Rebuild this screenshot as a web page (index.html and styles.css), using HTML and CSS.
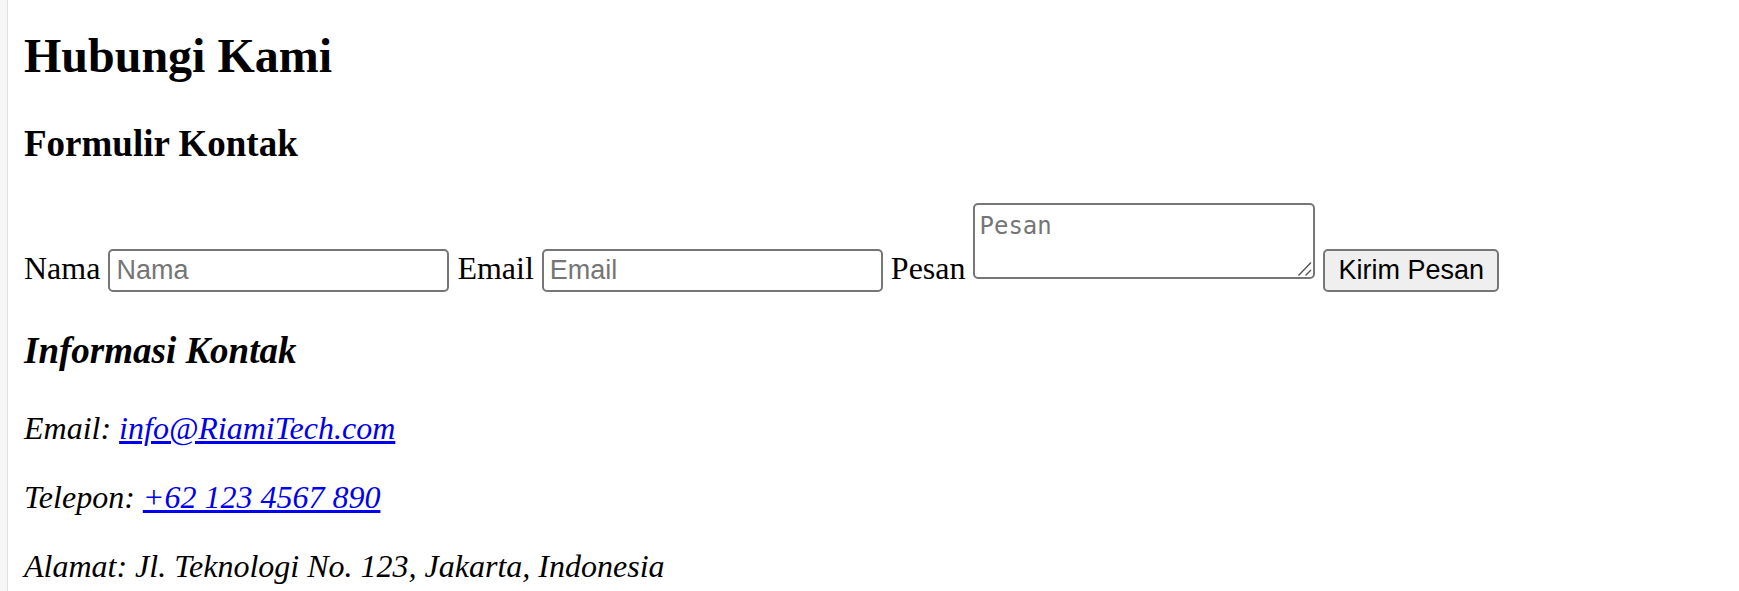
FILE: index.html
```html
<!DOCTYPE html>
<html lang="id">
<head>
<meta charset="utf-8">
<title>Hubungi Kami</title>
<link rel="stylesheet" href="styles.css">
</head>
<body>
<main class="page">
  <h1 class="title">Hubungi Kami</h1>
  <section>
    <h2 class="subtitle">Formulir Kontak</h2>
    <form class="form">
      <label for="nama">Nama</label>
      <input class="field" type="text" id="nama" placeholder="Nama">
      <label for="email">Email</label>
      <input class="field" type="email" id="email" placeholder="Email">
      <label for="pesan">Pesan</label>
      <span class="message"><textarea class="area" id="pesan" rows="2" placeholder="Pesan"></textarea><svg class="grip" viewBox="0 0 16 16" aria-hidden="true"><path d="M1.500 14.500 14 1.500M8.500 14.500 14 9" fill="none" stroke="#555" stroke-width="1.4"/></svg></span>
      <button class="send" type="submit">Kirim Pesan</button>
    </form>
  </section>
  <address class="info">
    <h2 class="subtitle">Informasi Kontak</h2>
    <p class="line">Email: <a class="link" href="mailto:info@RiamiTech.com">info@RiamiTech.com</a></p>
    <p class="line">Telepon: <a class="link" href="tel:+621234567890">+62 123 4567 890</a></p>
    <p class="line">Alamat: Jl. Teknologi No. 123, Jakarta, Indonesia</p>
  </address>
</main>
</body>
</html>
```
FILE: styles.css
```css
html {
  background: #f6f6f6;
}

body {
  margin: 0 0 0 7px;
  font: 32px/37px "Liberation Serif", "Times New Roman", serif;
  color: #000;
}

.page {
  box-sizing: border-box;
  min-height: 100vh;
  padding: 28px 16px 0;
  border-left: 1px solid #e0e0e0;
  background: #fff;
}

.title {
  margin: 0 0 39px;
  font-size: 48px;
  line-height: 55px;
}

.subtitle {
  margin: 0 0 38px;
  font-size: 37px;
  line-height: 43px;
}

.form {
  margin-bottom: 37px;
}

.field,
.area {
  box-sizing: border-box;
  width: 341px;
  margin: 0;
  border: 2px solid #767676;
  border-radius: 5px;
  background: #fff;
}

.field {
  height: 43px;
  padding: 2px 6px;
  font: 27px "Liberation Sans", Arial, sans-serif;
}

.field::placeholder,
.area::placeholder {
  color: #757575;
}

.message {
  display: inline-block;
  position: relative;
}

.area {
  width: 342px;
  height: 76px;
  padding: 5px 4px 3px;
  font: 24px/32px "DejaVu Sans Mono", monospace;
  vertical-align: baseline;
  resize: none;
}

.grip {
  position: absolute;
  right: 2px;
  bottom: 10px;
  width: 16px;
  height: 16px;
  pointer-events: none;
}

.send {
  height: 43px;
  margin: 0;
  padding: 2px 13px;
  border: 2px solid #767676;
  border-radius: 5px;
  background: #efefef;
  color: #000;
  font: 27px "Liberation Sans", Arial, sans-serif;
}

.info {
  font-style: italic;
}

.line {
  margin: 0 0 32px;
}

.line:last-child {
  margin-bottom: 0;
}

.link {
  color: #00e;
  text-decoration-thickness: 3px;
}
```
